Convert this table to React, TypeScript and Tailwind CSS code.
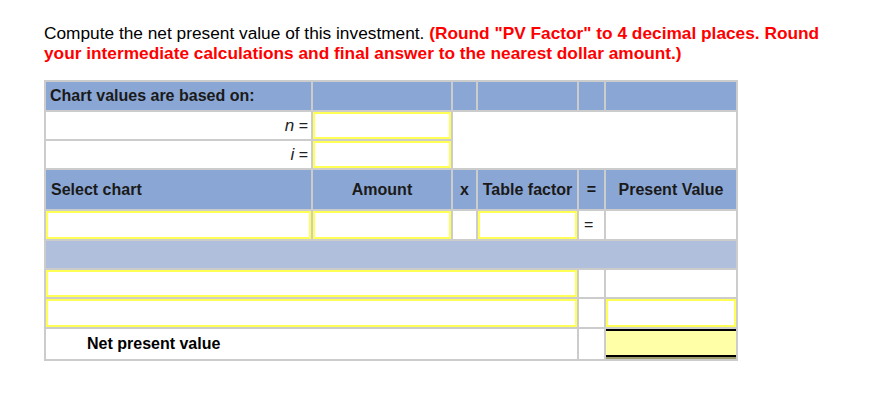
const HEAD = "bg-[#8aa6d4] flex items-center text-[16px] font-bold text-[#1a1a1a]";
const WHITE = "bg-white flex items-center";

function Field({ className = "" }: { className?: string }) {
  return <div className={`bg-white border-2 border-[#ffff55] ${className}`} />;
}

export default function App() {
  return (
    <div className="min-h-screen bg-white pl-[44px] pt-[23px] font-['Liberation_Sans',Arial,sans-serif]">
      <p className="text-[17.3px] leading-[20px] text-black">
        Compute the net present value of this investment.{" "}
        <span className="font-bold text-[#ff0000]">
          (Round "PV Factor" to 4 decimal places. Round
          <br />
          your intermediate calculations and final answer to the nearest dollar amount.)
        </span>
      </p>

      <div className="mt-[17px] grid w-fit grid-cols-[265px_138px_23px_99px_25px_130px] grid-rows-[28px_27px_27px_39px_28px_27px_27px_28px_30px] gap-[2px] bg-[#cccccc] p-[2px]">
        {/* header 1 */}
        <div className={`${HEAD} pl-[4px]`}>Chart values are based on:</div>
        <div className={HEAD} />
        <div className={HEAD} />
        <div className={HEAD} />
        <div className={HEAD} />
        <div className={HEAD} />

        {/* n / i rows */}
        <div className={`${WHITE} justify-end pr-[3px] text-[16px] text-[#222]`}>
          <i className="text-[17px]">n</i>&nbsp;=
        </div>
        <Field />
        <div className="col-span-4 row-span-2 bg-white" />
        <div className={`${WHITE} justify-end pr-[3px] text-[16px] text-[#222]`}>
          <i className="text-[17px]">i</i>&nbsp;=
        </div>
        <Field />

        {/* header 2 */}
        <div className={`${HEAD} pl-[5px]`}>Select chart</div>
        <div className={`${HEAD} justify-center`}>Amount</div>
        <div className={`${HEAD} justify-center`}>x</div>
        <div className={`${HEAD} justify-center`}>Table factor</div>
        <div className={`${HEAD} justify-center`}>=</div>
        <div className={`${HEAD} justify-center`}>Present Value</div>

        {/* input row */}
        <Field />
        <Field />
        <div className="bg-white" />
        <Field />
        <div className={`${WHITE} pl-[5px] text-[16px] text-[#222]`}>=</div>
        <div className="bg-white" />

        {/* light band */}
        <div className="col-span-6 bg-[#b0c0dc]" />

        <Field className="col-span-4" />
        <div className="bg-white" />
        <div className="bg-white" />

        <Field className="col-span-4" />
        <div className="bg-white" />
        <Field />

        <div className={`${WHITE} col-span-4 pl-[41px] text-[16px] font-bold text-black`}>Net present value</div>
        <div className="bg-white" />
        <div className="flex flex-col">
          <div className="flex-1 border-t-2 border-b-2 border-black bg-[#ffffa8]" />
          <div className="h-[2px] bg-[#9c9c6c]" />
        </div>
      </div>
    </div>
  );
}
